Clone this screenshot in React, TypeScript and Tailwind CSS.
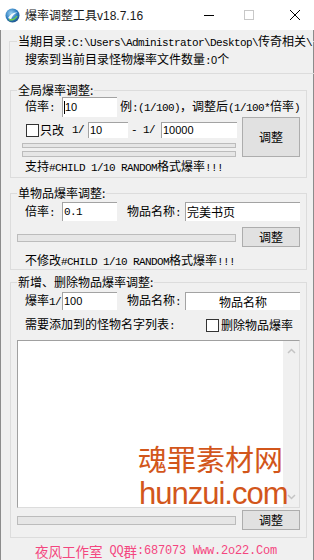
import React from "react";

const CJK = "font-['Noto_Sans_CJK_SC',sans-serif]";

function M({ children, className = "" }: { children: React.ReactNode; className?: string }) {
  return (
    <span className={`font-['Liberation_Mono',monospace] text-[11px] tracking-[-0.6px] whitespace-pre ${className}`}>
      {children}
    </span>
  );
}

function Legend({ children, left = "left-[6px]" }: { children: React.ReactNode; left?: string }) {
  return (
    <div className={`absolute ${left} -top-[8px] px-[1px] bg-[#f0f0f0] leading-[14px] whitespace-nowrap`}>
      {children}
    </div>
  );
}

function Input({
  w,
  h,
  children,
  className = "",
  center = false,
  caret = false,
}: {
  w: string;
  h: string;
  children?: React.ReactNode;
  className?: string;
  center?: boolean;
  caret?: boolean;
}) {
  return (
    <div
      className={`${w} ${h} shrink-0 bg-white border-t border-l border-[#a3a3a3] flex items-center ${
        center ? "justify-center" : "pl-[1px]"
      } overflow-hidden whitespace-nowrap ${className}`}
    >
      {caret && <span className="w-px h-[13px] bg-black" />}
      {children}
    </div>
  );
}

function Num({ children }: { children: React.ReactNode }) {
  return <span className="font-['Liberation_Sans',sans-serif] text-[11px]">{children}</span>;
}

function Check({ className = "" }: { className?: string }) {
  return <div className={`w-[13px] h-[13px] shrink-0 bg-white border border-[#333333] ${className}`} />;
}

function Btn({ h, className = "" }: { h: string; className?: string }) {
  return (
    <div
      className={`w-[58px] ${h} shrink-0 bg-[#e1e1e1] border border-[#adadad] flex items-center justify-center text-[12px] ${className}`}
    >
      调整
    </div>
  );
}

function Bar({ className = "" }: { className?: string }) {
  return <div className={`shrink-0 border border-[#bcbcbc] bg-[#e6e6e6] ${className}`} />;
}

function Chevron({ down = false }: { down?: boolean }) {
  return (
    <svg width="9" height="6" viewBox="0 0 9 6">
      <polyline
        points={down ? "1,1 4.5,4.5 8,1" : "1,5 4.5,1.5 8,5"}
        fill="none"
        stroke="#c4c4c4"
        strokeWidth="1.5"
      />
    </svg>
  );
}

function AppIcon() {
  return (
    <svg width="15" height="15" viewBox="0 0 15 15">
      <defs>
        <radialGradient id="g" cx="0.4" cy="0.35" r="0.7">
          <stop offset="0" stopColor="#9fd3f2" />
          <stop offset="0.6" stopColor="#2f7fc1" />
          <stop offset="1" stopColor="#1b4f86" />
        </radialGradient>
      </defs>
      <circle cx="7.5" cy="7.5" r="7" fill="url(#g)" />
      <path d="M3 10 C5 6, 9 4, 12.5 4.5 C9.5 5.5, 7 8, 6 11.5 Z" fill="#ffffff" opacity="0.9" />
      <path d="M4 11.5 C7 12.5, 10.5 11, 12 8" fill="none" stroke="#6fcf4a" strokeWidth="1.4" />
    </svg>
  );
}

export default function App() {
  return (
    <div className={`relative w-[314px] h-[560px] overflow-hidden bg-[#f0f0f0] text-black text-[12px] ${CJK}`}>
      {/* title bar */}
      <div className="h-[30px] bg-white flex items-center pl-[5px]">
        <AppIcon />
        <span className="ml-[5px] text-[12px] text-[#1a1a1a]">
          爆率调整工具<span className="font-['Liberation_Sans',sans-serif]">v18.7.16</span>
        </span>
        <div className="ml-auto flex items-center pr-[14px]">
          <svg width="10" height="10" viewBox="0 0 10 10">
            <line x1="0" y1="5.5" x2="10" y2="5.5" stroke="#000" strokeWidth="1" />
          </svg>
          <svg width="10" height="10" viewBox="0 0 10 10" className="ml-[30px]">
            <rect x="0.5" y="0.5" width="9" height="9" fill="none" stroke="#c8c8c8" strokeWidth="1" />
          </svg>
          <svg width="10" height="10" viewBox="0 0 10 10" className="ml-[36px]">
            <line x1="0" y1="0" x2="10" y2="10" stroke="#000" strokeWidth="1" />
            <line x1="10" y1="0" x2="0" y2="10" stroke="#000" strokeWidth="1" />
          </svg>
        </div>
      </div>

      {/* body */}
      <div className="h-[530px] border-x border-[#8c8c8c] flex flex-col">
        {/* current dir */}
        <div className="relative ml-[8px] mt-[11px] w-[320px] h-[33px] shrink-0 border border-[#dcdcdc]">
          <Legend left="left-[7px]">
            当期目录<M>{":C:\\Users\\Administrator\\Desktop\\"}</M>传奇相关<M>{"\\"}</M>
          </Legend>
          <div className="pt-[10px] pl-[15px] leading-[14px] whitespace-nowrap">
            搜索到当前目录怪物爆率文件数量<M>:</M>
            <Num>0</Num>个
          </div>
        </div>

        {/* global */}
        <div className="relative ml-[9px] mt-[16px] w-[297px] h-[88px] shrink-0 border border-[#dcdcdc]">
          <Legend>全局爆率调整:</Legend>
          <div className="flex items-center h-[20px] mt-[6px] pl-[14px]">
            <span className="w-[37px] shrink-0">
              倍率<M>:</M>
            </span>
            <Input w="w-[55px]" h="h-[20px]" caret>
              <Num>10</Num>
            </Input>
            <span className="ml-[3px] whitespace-nowrap">
              例<M>:(1/100)</M>，调整后<M>(1/100*</M>倍率<M>)</M>
            </span>
          </div>
          <div className="flex">
            <div className="w-[226px] shrink-0">
              <div className="flex items-center h-[16px] mt-[5px] pl-[15px]">
                <Check />
                <span className="ml-[1px] w-[24px] shrink-0">只改</span>
                <M className="ml-[8px] w-[12px]">1/</M>
                <Input w="w-[40px]" h="h-[16px]" className="ml-[4px]">
                  <Num>10</Num>
                </Input>
                <M className="ml-[3px] w-[24px]">- 1/</M>
                <Input w="w-[76px]" h="h-[16px]" className="ml-[6px]">
                  <Num>10000</Num>
                </Input>
              </div>
              <Bar className="ml-[11px] mt-[5px] w-[214px] h-[5px]" />
              <Bar className="ml-[11px] mt-[3px] w-[214px] h-[6px]" />
            </div>
            <Btn h="h-[40px]" className="ml-[5px]" />
          </div>
          <div className="mt-[2px] pl-[14px] leading-[14px] whitespace-nowrap">
            支持<M>#CHILD 1/10 RANDOM</M>格式爆率<M>!!!</M>
          </div>
        </div>

        {/* single item */}
        <div className="relative ml-[9px] mt-[15px] w-[297px] h-[77px] shrink-0 border border-[#dcdcdc]">
          <Legend>单物品爆率调整:</Legend>
          <div className="flex items-center h-[19px] mt-[8px] pl-[14px]">
            <span className="w-[37px] shrink-0">
              倍率<M>:</M>
            </span>
            <Input w="w-[55px]" h="h-[19px]">
              <M>0.1</M>
            </Input>
            <span className="ml-[10px] w-[58px] shrink-0">
              物品名称<M>:</M>
            </span>
            <Input w="w-[115px]" h="h-[19px]">
              完美书页
            </Input>
          </div>
          <div className="flex mt-[6px]">
            <Bar className="ml-[6px] mt-[7px] w-[219px] h-[8px]" />
            <Btn h="h-[20px]" className="ml-[6px]" />
          </div>
          <div className="mt-[6px] pl-[14px] leading-[14px] whitespace-nowrap">
            不修改<M>#CHILD 1/10 RANDOM</M>格式爆率<M>!!!</M>
          </div>
        </div>

        {/* add / delete */}
        <div className="relative ml-[9px] mt-[12px] w-[297px] h-[256px] shrink-0 border border-[#dcdcdc]">
          <Legend>新增、删除物品爆率调整:</Legend>
          <div className="flex items-center h-[18px] mt-[9px] pl-[14px]">
            <span className="w-[37px] shrink-0 whitespace-nowrap">
              爆率<M>1/</M>
            </span>
            <Input w="w-[55px]" h="h-[18px]">
              <Num>100</Num>
            </Input>
            <span className="ml-[10px] w-[58px] shrink-0">
              物品名称<M>:</M>
            </span>
            <Input w="w-[115px]" h="h-[18px]" center>
              物品名称
            </Input>
          </div>
          <div className="flex items-center h-[14px] mt-[8px] pl-[14px] whitespace-nowrap">
            <span className="w-[150px] shrink-0">
              需要添加到的怪物名字列表<M>:</M>
            </span>
            <Check className="ml-[31px]" />
            <span className="ml-[2px]">删除物品爆率</span>
          </div>
          <div className="ml-[6px] mt-[8px] w-[283px] h-[168px] flex border-t border-l border-[#a0a0a0] border-r border-b border-r-[#dcdcdc] border-b-[#dcdcdc] bg-white">
            <div className="flex-1" />
            <div className="w-[16px] bg-[#f0f0f0] flex flex-col items-center justify-between pt-[7px] pb-[7px]">
              <Chevron />
              <Chevron down />
            </div>
          </div>
          <div className="flex mt-[2px]">
            <Bar className="ml-[6px] mt-[6px] w-[219px] h-[9px]" />
            <Btn h="h-[20px]" className="ml-[6px]" />
          </div>
        </div>

        {/* footer */}
        <div className="mt-[5px] pl-[34px] h-[16px] leading-[16px] text-[#f4467f] whitespace-nowrap flex items-center">
          <span className="text-[13.5px] leading-[16px]">夜风工作室</span>
          <span className="font-['Liberation_Mono',monospace] text-[12px] leading-[16px] tracking-[-0.2px] whitespace-pre"> QQ</span>
          <span className="text-[13.5px] leading-[16px]">群</span>
          <span className="font-['Liberation_Mono',monospace] text-[12px] leading-[16px] tracking-[-0.2px] whitespace-pre">:687073 Www.2o22.Com</span>
        </div>
      </div>

      {/* watermark */}
      <div className="absolute left-[138px] top-[444px] text-[29px] leading-[29px] text-[#d2561b] whitespace-nowrap">
        魂罪素材网
      </div>
      <div className="absolute left-[139px] top-[478px] font-['Liberation_Sans',sans-serif] text-[31px] leading-[31px] tracking-[-1px] text-[#d2561b] whitespace-nowrap">
        hunzui.com
      </div>
    </div>
  );
}
